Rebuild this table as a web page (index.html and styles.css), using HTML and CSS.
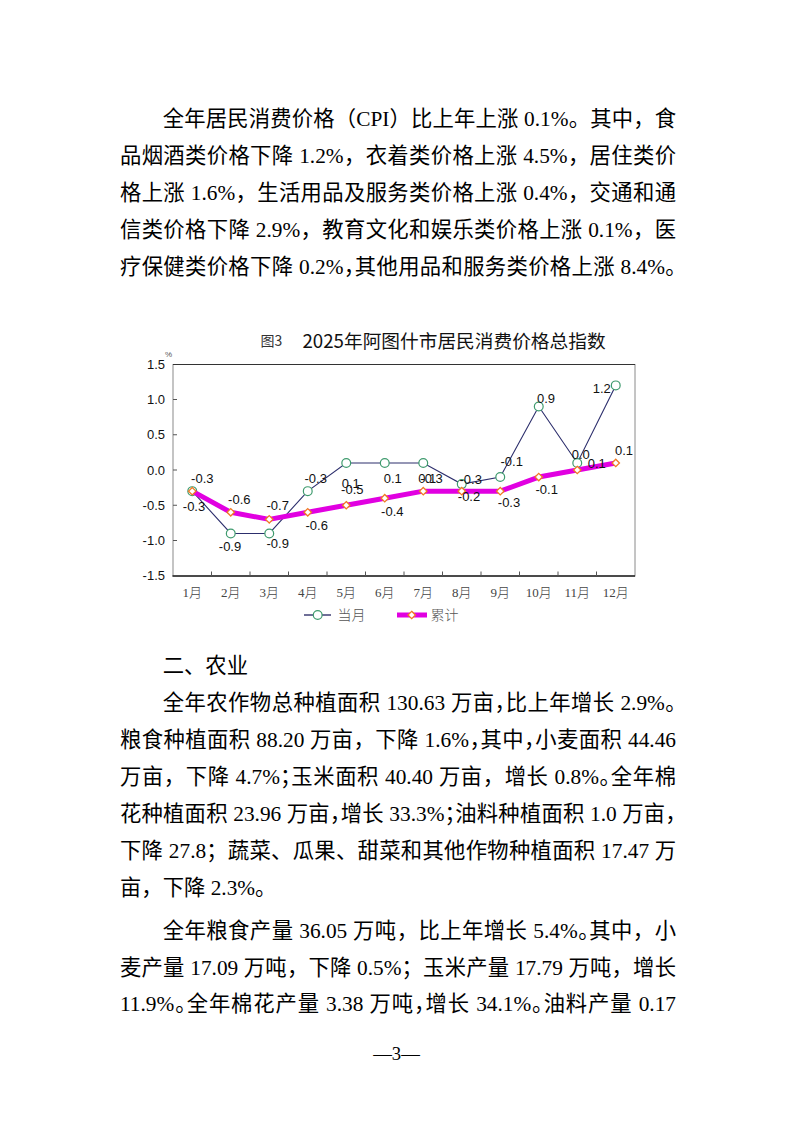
FILE: index.html
```html
<!DOCTYPE html>
<html lang="zh-CN">
<head>
<meta charset="utf-8">
<title>2025年阿图什市国民经济和社会发展统计公报</title>
<link rel="stylesheet" href="styles.css">
</head>
<body>
<div class="page">
  <div class="col">
    <div class="para">
      <div class="ln ind">全年居民消费价格（CPI）比上年上涨 0.1%。其中，食</div>
      <div class="ln">品烟酒类价格下降 1.2%，衣着类价格上涨 4.5%，居住类价</div>
      <div class="ln">格上涨 1.6%，生活用品及服务类价格上涨 0.4%，交通和通</div>
      <div class="ln">信类价格下降 2.9%，教育文化和娱乐类价格上涨 0.1%，医</div>
      <div class="ln">疗保健类价格下降 0.2%<span class="h">，</span>其他用品和服务类价格上涨 8.4%<span class="h">。</span></div>
    </div>

    <svg class="chart" viewBox="120 318 560 315" width="560" height="315">
      <defs>
        <path id="dm" d="M0,-3.7 L3.7,0 L0,3.7 L-3.7,0 Z" fill="#fff" stroke="#f07a22" stroke-width="1.3"/>
        <circle id="ci" cx="0" cy="0" r="4.4" fill="#fff" stroke="#3f9b6e" stroke-width="1.2"/>
      </defs>

      <text x="260.5" y="346" class="t-fig">图3</text>
      <text x="302.5" y="347.5" class="t-title">2025年阿图什市居民消费价格总指数</text>

      <rect x="173" y="364.5" width="462" height="211.5" fill="none" stroke="#8a8a8a" stroke-width="1"/>
      <line x1="173" y1="364.5" x2="635" y2="364.5" stroke="#333" stroke-width="1"/>
      <line x1="172.5" y1="576" x2="635" y2="576" stroke="#222" stroke-width="1.3"/>

      <g stroke="#555" stroke-width="1">
        <line x1="173" y1="399.5" x2="177" y2="399.5"/>
        <line x1="173" y1="434.75" x2="177" y2="434.75"/>
        <line x1="173" y1="470" x2="177" y2="470"/>
        <line x1="173" y1="505.25" x2="177" y2="505.25"/>
        <line x1="173" y1="540.5" x2="177" y2="540.5"/>
        <line x1="211.5" y1="576" x2="211.5" y2="571.5"/>
        <line x1="250" y1="576" x2="250" y2="571.5"/>
        <line x1="288.5" y1="576" x2="288.5" y2="571.5"/>
        <line x1="327" y1="576" x2="327" y2="571.5"/>
        <line x1="365.5" y1="576" x2="365.5" y2="571.5"/>
        <line x1="404" y1="576" x2="404" y2="571.5"/>
        <line x1="442.5" y1="576" x2="442.5" y2="571.5"/>
        <line x1="481" y1="576" x2="481" y2="571.5"/>
        <line x1="519.5" y1="576" x2="519.5" y2="571.5"/>
        <line x1="558" y1="576" x2="558" y2="571.5"/>
        <line x1="596.5" y1="576" x2="596.5" y2="571.5"/>
      </g>

      <g class="ylab">
        <text x="165" y="368.9">1.5</text>
        <text x="165" y="404.1">1.0</text>
        <text x="165" y="439.4">0.5</text>
        <text x="165" y="474.6">0.0</text>
        <text x="165" y="509.9">-0.5</text>
        <text x="165" y="545.1">-1.0</text>
        <text x="165" y="580.4">-1.5</text>
      </g>
      <text x="168.5" y="357" class="pct">%</text>

      <polyline class="l-month" points="192.25,491.15 230.75,533.45 269.25,533.45 307.75,491.15 346.25,462.95 384.75,462.95 423.25,462.95 461.75,484.1 500.25,477.05 538.75,406.55 577.25,462.95 615.75,385.4"/>
      <g>
        <use href="#ci" x="192.25" y="491.15"/>
        <use href="#ci" x="230.75" y="533.45"/>
        <use href="#ci" x="269.25" y="533.45"/>
        <use href="#ci" x="307.75" y="491.15"/>
        <use href="#ci" x="346.25" y="462.95"/>
        <use href="#ci" x="384.75" y="462.95"/>
        <use href="#ci" x="423.25" y="462.95"/>
        <use href="#ci" x="461.75" y="484.1"/>
        <use href="#ci" x="500.25" y="477.05"/>
        <use href="#ci" x="538.75" y="406.55"/>
        <use href="#ci" x="577.25" y="462.95"/>
        <use href="#ci" x="615.75" y="385.4"/>
      </g>

      <polyline class="l-cum" points="192.25,491.15 230.75,512.3 269.25,519.35 307.75,512.3 346.25,505.25 384.75,498.2 423.25,491.15 461.75,491.15 500.25,491.15 538.75,477.05 577.25,470 615.75,462.95"/>
      <g>
        <use href="#dm" x="192.25" y="491.15"/>
        <use href="#dm" x="230.75" y="512.3"/>
        <use href="#dm" x="269.25" y="519.35"/>
        <use href="#dm" x="307.75" y="512.3"/>
        <use href="#dm" x="346.25" y="505.25"/>
        <use href="#dm" x="384.75" y="498.2"/>
        <use href="#dm" x="423.25" y="491.15"/>
        <use href="#dm" x="461.75" y="491.15"/>
        <use href="#dm" x="500.25" y="491.15"/>
        <use href="#dm" x="538.75" y="477.05"/>
        <use href="#dm" x="577.25" y="470"/>
        <use href="#dm" x="615.75" y="462.95"/>
      </g>

      <g class="dlab">
        <text x="202.3" y="483">-0.3</text>
        <text x="194" y="511.4">-0.3</text>
        <text x="239.3" y="503.7">-0.6</text>
        <text x="230" y="551.4">-0.9</text>
        <text x="277.7" y="509.7">-0.7</text>
        <text x="277.7" y="548">-0.9</text>
        <text x="315.7" y="483">-0.3</text>
        <text x="316.7" y="529.7">-0.6</text>
        <text x="350.7" y="488">0.1</text>
        <text x="352.3" y="494">-0.5</text>
        <text x="392.7" y="483">0.1</text>
        <text x="392.3" y="516.4">-0.4</text>
        <text x="427.2" y="483">0.1</text>
        <text x="431.5" y="483">-0.3</text>
        <text x="470.7" y="483.7">-0.3</text>
        <text x="469" y="501.4">-0.2</text>
        <text x="511.7" y="466.4">-0.1</text>
        <text x="509" y="507.4">-0.3</text>
        <text x="546" y="403">0.9</text>
        <text x="546.7" y="494">-0.1</text>
        <text x="580.7" y="459">0.0</text>
        <text x="596.7" y="468">0.1</text>
        <text x="601.7" y="393">1.2</text>
        <text x="624" y="454.7">0.1</text>
      </g>

      <g class="xlab">
        <text x="192.25" y="597.2">1月</text>
        <text x="230.75" y="597.2">2月</text>
        <text x="269.25" y="597.2">3月</text>
        <text x="307.75" y="597.2">4月</text>
        <text x="346.25" y="597.2">5月</text>
        <text x="384.75" y="597.2">6月</text>
        <text x="423.25" y="597.2">7月</text>
        <text x="461.75" y="597.2">8月</text>
        <text x="500.25" y="597.2">9月</text>
        <text x="538.75" y="597.2">10月</text>
        <text x="577.25" y="597.2">11月</text>
        <text x="615.75" y="597.2">12月</text>
      </g>

      <line x1="304" y1="615" x2="331" y2="615" stroke="#4b4b7d" stroke-width="1.6"/>
      <use href="#ci" x="317.7" y="615"/>
      <text x="337.5" y="620" class="lg">当月</text>
      <line x1="397" y1="615" x2="427" y2="615" stroke="#e100e1" stroke-width="5"/>
      <use href="#dm" x="411.7" y="615"/>
      <text x="430.5" y="620" class="lg">累计</text>
    </svg>

    <div class="ln ind head">二、农业</div>
    <div class="para">
      <div class="ln ind">全年农作物总种植面积 130.63 万亩<span class="h">，</span>比上年增长 2.9%<span class="h">。</span></div>
      <div class="ln">粮食种植面积 88.20 万亩，下降 1.6%<span class="h">，</span>其中<span class="h">，</span>小麦面积 44.46</div>
      <div class="ln">万亩，下降 4.7%<span class="h">；</span>玉米面积 40.40 万亩，增长 0.8%<span class="h">。</span>全年棉</div>
      <div class="ln">花种植面积 23.96 万亩<span class="h">，</span>增长 33.3%<span class="h">；</span>油料种植面积 1.0 万亩<span class="h">，</span></div>
      <div class="ln">下降 27.8；蔬菜、瓜果、甜菜和其他作物种植面积 17.47 万</div>
      <div class="ln last">亩，下降 2.3%。</div>
    </div>
    <div class="para p3">
      <div class="ln ind">全年粮食产量 36.05 万吨，比上年增长 5.4%<span class="h">。</span>其中，小</div>
      <div class="ln">麦产量 17.09 万吨，下降 0.5%；玉米产量 17.79 万吨，增长</div>
      <div class="ln">11.9%<span class="h">。</span>全年棉花产量 3.38 万吨<span class="h">，</span>增长 34.1%<span class="h">。</span>油料产量 0.17</div>
    </div>
  </div>
  <div class="pagenum">—3—</div>
</div>
</body>
</html>
```

FILE: styles.css
```css
html, body {
  margin: 0;
  padding: 0;
  background: #fff;
}

.page {
  width: 793px;
  height: 1122px;
  padding-top: 101px;
  box-sizing: border-box;
  overflow: hidden;
}

.col {
  margin-left: 120px;
  width: 556px;
  font-family: "Liberation Serif", "Noto Sans CJK SC", serif;
  font-size: 21.33px;
  color: #000;
}

.ln {
  height: 36.9px;
  line-height: 36.9px;
  white-space: nowrap;
  text-align: justify;
  text-align-last: justify;
}

.ln.last,
.ln.head {
  text-align-last: left;
}

.ind {
  text-indent: 2em;
}

.h {
  font-feature-settings: "halt";
}

.head {
  margin-top: 15.5px;
}

.p3 {
  margin-top: 6px;
}

.chart {
  display: block;
  margin-top: 32.5px;
  width: 560px;
  height: 315px;
  overflow: visible;
}

.t-fig {
  font-family: "Noto Sans CJK SC", "Liberation Sans", sans-serif;
  font-size: 14px;
  fill: #333;
}

.t-title {
  font-family: "Noto Sans CJK SC", "Liberation Sans", sans-serif;
  font-size: 18.7px;
  fill: #111;
}

.ylab text {
  font-family: "Liberation Sans", Arial, sans-serif;
  font-size: 13px;
  fill: #111;
  text-anchor: end;
}

.pct {
  font-family: "Liberation Sans", Arial, sans-serif;
  font-size: 8px;
  fill: #555;
  text-anchor: middle;
}

.l-month {
  fill: none;
  stroke: #2c2e6c;
  stroke-width: 1.1;
}

.l-cum {
  fill: none;
  stroke: #e100e1;
  stroke-width: 5;
  stroke-linejoin: round;
  stroke-linecap: butt;
}

.dlab text {
  font-family: "Liberation Sans", Arial, sans-serif;
  font-size: 13px;
  fill: #111;
  text-anchor: middle;
}

.xlab text {
  font-family: "Liberation Serif", "Noto Sans CJK SC", serif;
  font-size: 13px;
  font-weight: 300;
  fill: #444;
  text-anchor: middle;
}

.lg {
  font-family: "Noto Sans CJK SC", sans-serif;
  font-size: 14px;
  font-weight: 300;
  fill: #555;
}

.pagenum {
  margin-top: 19px;
  height: 24px;
  line-height: 24px;
  text-align: center;
  font-family: "Liberation Serif", serif;
  font-size: 18.67px;
  color: #000;
}
```
